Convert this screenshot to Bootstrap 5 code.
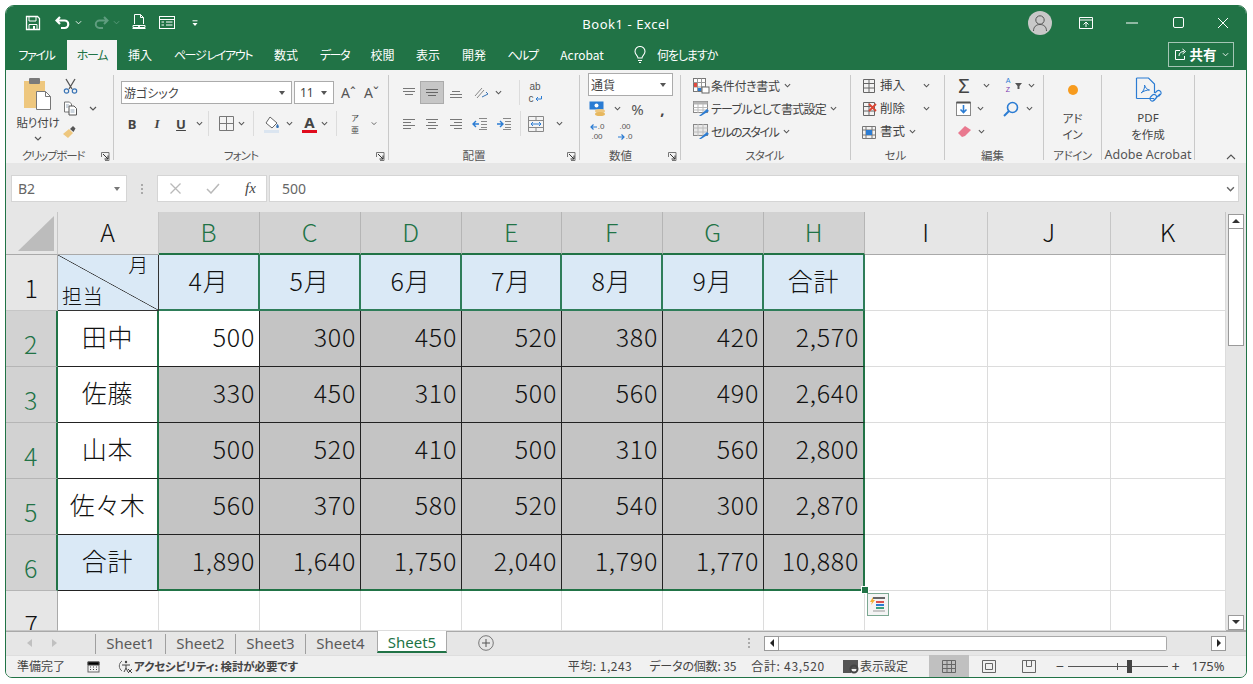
<!DOCTYPE html>
<html lang="ja">
<head>
<meta charset="utf-8">
<title>Book1 - Excel</title>
<link href="https://cdn.jsdelivr.net/npm/bootstrap@5.3.0/dist/css/bootstrap.min.css" rel="stylesheet">
<style>
html,body{height:100%;background:#fff;overflow:hidden}
body{font-family:"Noto Sans CJK JP","Noto Sans",sans-serif;font-feature-settings:"palt";font-size:12px;color:#444;padding:5px 6px 6px 5px}
.xl-win{width:1242px;height:673px;border:1px solid #217346;border-radius:9px 9px 7px 7px;overflow:hidden;display:flex;flex-direction:column;background:#f3f3f3}
.xl-title{height:34px;background:#217346;color:#fff;position:relative}
.xl-title svg{flex:none}
.qa{padding-left:19px}
.book{position:absolute;left:0;right:0;text-align:center;font:13px "Noto Sans",sans-serif;letter-spacing:.55px;top:9px;pointer-events:none}
.avatar{width:24px;height:24px;border-radius:50%;background:#c8c8c8;margin-right:11px}
.winbtns{width:46px;display:flex;justify-content:center}
.xl-tabs{height:31px;background:#217346;color:#fff;align-items:stretch}
.xl-tabs .nav-link{color:#fff;padding:0;height:30px;line-height:30px;font-size:12px;text-align:center;white-space:nowrap}
.xl-tabs .nav-link.active{background:#f3f3f3;color:#217346}
.xl-tabs .nav-link.kn{letter-spacing:-1.35px}
.t61{width:61px}.t50{width:50px}.t46{width:46px}.t100{width:100px}.t51{width:51px}.t45{width:45px}.t68{width:68px}
.tell{margin-left:18px;gap:11px;display:flex;align-items:center;letter-spacing:-1.1px}
.share{margin:2px 12px 0 auto;width:66px;height:25px;border:1px solid #a5c5b5;display:flex;align-items:center;justify-content:center;gap:3px;font-size:13.5px;font-weight:700;color:#fff}
.xl-ribbon{height:93px;padding:5px 0 3px;background:#f3f3f3;align-items:stretch}
.rg{border-right:1px solid #c9c9c9;flex:none;display:flex;flex-direction:column}
.w108{width:108px}.w275{width:275px}.w191{width:191px}.w101{width:101px}.w170{width:170px}.w94{width:94px}.w99{width:99px}.w58{width:58px}.w93{width:93px}
.rb{height:72px;flex:none}
.rl{height:13px;line-height:16px;display:grid;grid-template-columns:1fr auto 1fr;font-size:11.5px;white-space:nowrap;color:#555}
.rl>span{grid-column:2}
.rl>svg{grid-column:3;justify-self:end;margin:5px 3px 0 0}
.rr{height:23px;display:flex;align-items:center;white-space:nowrap}
.stk{margin-top:-1px}
.ic{display:flex;align-items:center;justify-content:center;flex:none}
.sl{background:#fff;border:1px solid #ababab;height:23px;display:flex;align-items:center;padding:0 6px 0 2px;justify-content:space-between}
.fnt{width:171px;margin-left:7px}.fsz{width:40px;margin-left:2px;padding-left:5px;font-family:"Noto Sans"}
.seln{width:85px;margin:-2px 0 1px 8px}
.vsep{width:1px;height:25px;background:#dcdcdc;flex:none}
.bold{font:700 13px "Noto Sans",sans-serif;color:#444}
.grow{font:14px "Noto Sans",sans-serif;color:#555}
.ib{font:italic 700 13px "Liberation Serif",serif}
.alsel{background:#c6c6c6;border:1px solid #ababab}
.pct{font:15px "Noto Sans",sans-serif;color:#555}
.big{font-size:11.5px;line-height:16px;text-align:center}
.stxt{font-size:12px;letter-spacing:-.3px;margin-left:1px}
.ctxt{font-size:12.5px}
.tiny{font:8px/9.5px "Liberation Sans",sans-serif;color:#555;flex-direction:column}
.tiny span{display:flex;align-items:center;gap:1px}
.wrapt{font:10px/11.5px "Liberation Sans",sans-serif;color:#555;flex-direction:column}
.wrapt span{display:flex;align-items:center;gap:1px}
.furi{font-size:8px;line-height:11.6px;flex-direction:column}
.xl-fx{height:49px;background:#e6e6e6;padding:12px 7px 10px 5px;gap:0;align-items:stretch}
.nbx{width:116px;background:#fff;border:1px solid #d5d5d5;font:14px "Noto Sans",sans-serif;color:#666;padding:0 6px;display:flex;align-items:center;justify-content:space-between}
.fxb{width:110px;background:#fff;border:1px solid #d5d5d5;display:flex;align-items:center;padding-left:12px;gap:25px}
.fxi{flex:1;background:#fff;border:1px solid #d5d5d5;margin-left:2px;font:14px "Noto Sans",sans-serif;color:#666;padding:0 3px 0 12px;display:flex;align-items:center;justify-content:space-between}
.dots{width:30px;display:flex;align-items:center;justify-content:center}
.xl-mid{height:419px;flex:none;background:#fff}
.sheet{position:relative;flex:none;display:grid;width:1220px;height:419px;overflow:hidden;grid-template-columns:52px 101px 101px 101px 101px 100px 101px 101px 101px 123px 123px 115px;grid-template-rows:43px repeat(6,56px) 40px;font-size:25px;color:#111;font-weight:300;letter-spacing:.7px}
.sheet>div{border-right:1px solid #dcdcdc;border-bottom:1px solid #dcdcdc;background:#fff;display:flex;align-items:center;justify-content:center;overflow:hidden;line-height:36px}
.sheet>div.hc{background:#e6e6e6;border-right-color:#c6c6c6;border-bottom-color:#a9a9a9;padding-bottom:3px}
.sheet>div.hr{background:#e6e6e6;border-right-color:#a9a9a9;border-bottom-color:#c6c6c6;align-items:flex-start;padding-top:14px}
.sheet>div.on{background:#d2d2d2;color:#217346;border-right-color:#b5b5b5;border-bottom-color:#b5b5b5}
.sheet>div.hc.on{border-bottom:2px solid #217346}
.sheet>div.hr.on{border-right:2px solid #217346}
.sheet>div.tb{background:#dae9f6;border:0 solid #2e7d59;border-right-width:2px;border-bottom-width:2px;padding-bottom:4px}
.sheet>div.ta{border-right:2px solid #217346;border-bottom:1px solid #222;padding-bottom:4px}
.sheet>div.ta.bl{background:#dae9f6;border-bottom-color:#222}
.sheet>div.nm{justify-content:flex-end;padding:0 4px 4px 0;background:#c4c4c4;border-right:1px solid #222;border-bottom:1px solid #222}
.sheet>div.nm.wt{background:#fff}
.sheet>div.nm.lr{border-right:2px solid #217346}
.sheet>div.nm.lb{border-bottom:2px solid #217346}
.sheet>div.corner{align-items:flex-end;justify-content:flex-end;padding:0 3px 3px 0;border-right-color:#c6c6c6;border-bottom-color:#a9a9a9;background:#e6e6e6}
.sheet>div.diag{background:linear-gradient(to top right,#dae9f6 calc(50% - .7px),#333 50%,#dae9f6 calc(50% + .7px));border-right:1px solid #333;border-bottom:1px solid #333;flex-direction:column;align-items:stretch;justify-content:space-between;font-size:20px;line-height:24px;padding:0 9px 2px 4px;overflow:visible}
.diag span:first-child{text-align:right;margin-top:-2px}
.sheet>div.handle{position:absolute;left:856px;top:375px;width:6px;height:6px;padding:0;border:0;background:#217346;outline:1px solid #fff}
.sheet>div.tag{position:absolute;left:861px;top:381px;width:22px;height:23px;border:1px solid #7ba892;background:#f4f4f4;display:flex;align-items:center;justify-content:center}
.vs{flex:1;background:#e6e6e6;padding:2px 2px 0;display:flex;flex-direction:column;border-bottom:1px solid #a9a9a9}
.sb{background:#fff;border:1px solid #9a9a9a;display:flex;align-items:center;justify-content:center;flex:none}
.vup{height:15px}.vth{height:117px;background:#fff;border:1px solid #9a9a9a;border-top:0}
.vdn{height:15px;margin-top:auto}
.xl-sh{height:24px;background:#e6e6e6;border-top:1px solid #a9a9a9;flex:none;align-items:stretch;font-size:15px;font-family:"Noto Sans","Noto Sans CJK JP",sans-serif;color:#5a5a5a}
.shn{width:89px;display:flex;align-items:center;padding-left:21px;gap:20px}
.stab{width:70px;height:20px;margin-top:2px;line-height:19px;text-align:center;border-left:1px solid #9f9f9f}
.stab.act{height:22px;margin-top:-1px;padding-top:3px;border:1px solid #a9a9a9;border-top:0;border-bottom:2px solid #217346;background:#fff;color:#217346;margin-left:2px;width:70px;line-height:16px}
.addt{margin-left:31px;display:flex;align-items:center}
.hsg{margin-left:auto;width:30px;display:flex;align-items:center;justify-content:center}
.hs{display:flex;width:462px;align-items:center;margin-right:20px}
.hb{width:15px;height:15px}.htr{width:388px;height:15px;background:#fff;border:1px solid #a9a9a9;border-left:0;border-radius:0 2px 2px 0}
.hsp{flex:1}
.xl-st{height:22px;background:#f1f1f1;border-top:1px solid #dedede;flex:none;align-items:center;font-size:12px;color:#444;white-space:nowrap}
.st1{width:87px;padding-left:11px;margin-right:-6px}
.acc{font-weight:700;font-size:11.5px;margin-left:1px;letter-spacing:-.15px}
.sum{letter-spacing:.5px}
.sum2{letter-spacing:.7px}
.cnt{letter-spacing:-.15px}
.vw{height:22px;display:flex;align-items:center;justify-content:center;width:40px}
.vw.cur{background:#c0c0c0}
.zoomline{width:100px;height:1px;background:#555;position:relative;margin:0 4px}
.thumb{position:absolute;left:59px;top:-6px;width:5px;height:13px;background:#444}
.tick{position:absolute;left:49px;top:-3px;width:1px;height:7px;background:#555}
</style>
</head>
<body>
<svg class="d-none">
<symbol id="chev" viewBox="0 0 8 5"><path d="M1 1l3 3 3-3" fill="none" stroke="#555" stroke-width="1.2"/></symbol>
<symbol id="lnc" viewBox="0 0 9 9"><path d="M.5 5V.5H8M8 .5V8.5H4" fill="none" stroke="#777"/><path d="M2 2l5 5M7 3.5V7H3.5" fill="none" stroke="#333"/></symbol>
<symbol id="lnt" viewBox="0 0 16 14"><path d="M2 2.5h12M2 5.5h12M4 8.500h8" stroke="#777" fill="none"/></symbol>
<symbol id="lnm" viewBox="0 0 16 14"><path d="M2 3.500h12M2 6.500h12M4 9.500h8" stroke="#666" fill="none"/></symbol>
<symbol id="lnb" viewBox="0 0 16 14"><path d="M4 5.500h8M2 8.500h12M2 11.500h12" stroke="#777" fill="none"/></symbol>
<symbol id="all" viewBox="0 0 16 14"><path d="M2 2.500h12M2 5.500h8M2 8.500h12M2 11.500h8" stroke="#777" fill="none"/></symbol>
<symbol id="alc" viewBox="0 0 16 14"><path d="M2 2.500h12M4 5.500h8M2 8.500h12M4 11.500h8" stroke="#777" fill="none"/></symbol>
<symbol id="alr" viewBox="0 0 16 14"><path d="M2 2.500h12M6 5.500h8M2 8.500h12M6 11.500h8" stroke="#777" fill="none"/></symbol>
<symbol id="grd" viewBox="0 0 16 16"><path d="M2.500 1.500h11v13h-11zM2.500 5.500h11M2.500 10h11M8 1.500v13" fill="none" stroke="#666"/></symbol>
<symbol id="arl" viewBox="0 0 7 6"><path d="M7 3H1M3.500.5L1 3l2.500 2.500" fill="none" stroke="#2b7cd3" stroke-width="1.200"/></symbol>
<symbol id="arr" viewBox="0 0 7 6"><path d="M0 3h6M3.500.5L6 3 3.500 5.500" fill="none" stroke="#2b7cd3" stroke-width="1.200"/></symbol>
</svg>
<div class="xl-win">
  <div class="xl-title d-flex align-items-center flex-none">
    <div class="qa d-flex align-items-center">
      <svg width="16" height="16" viewBox="0 0 16 16"><path d="M1.500 1.500h11l2 2v11h-13z" fill="none" stroke="#fff" stroke-width="1.300"/><path d="M4 2v4h7V2M4 14.500V9.500h8v5" fill="none" stroke="#fff"/><rect x="8" y="11" width="2" height="3" fill="#fff"/></svg>
      <svg width="16" height="14" viewBox="0 0 16 14" style="margin-left:14px"><path d="M5 1L1.500 4.500 5 8M2 4.500h7.500a3.700 3.700 0 0 1 0 7.500H6" fill="none" stroke="#fff" stroke-width="2.200"/></svg>
      <svg class="ms-1" width="7" height="5" viewBox="0 0 8 5"><path d="M1 1l3 3 3-3" fill="none" stroke="#fff"/></svg>
      <svg width="16" height="14" viewBox="0 0 16 14" style="margin-left:11px"><path d="M11 1l3.500 3.500L11 8M14 4.500H6.500a3.700 3.700 0 0 0 0 7.500H10" fill="none" stroke="#5f9d7f" stroke-width="2"/></svg>
      <svg class="ms-1" width="7" height="5" viewBox="0 0 8 5"><path d="M1 1l3 3 3-3" fill="none" stroke="#5f9d7f"/></svg>
      <svg width="14" height="17" viewBox="0 0 14 17" style="margin-left:12px"><path d="M2.500 10V.500h6l3 3V10M8.500.500v3h3" fill="none" stroke="#fff"/><path d="M.5 14.500h13M1 11.500h12v2H1z" fill="none" stroke="#fff"/><circle cx="7" cy="12.500" r="1" fill="#fff"/></svg>
      <svg width="16" height="13" viewBox="0 0 16 13" style="margin-left:13px"><rect x=".5" y=".5" width="15" height="12" fill="none" stroke="#fff"/><path d="M.5 3.500h15M7 6h6.500M7 9h6.500v0M2.500 6H5M2.500 9H5" stroke="#fff" fill="none"/></svg>
      <svg width="6" height="6" viewBox="0 0 6 6" style="margin-left:17px"><path d="M0.500 3h5l-2.500 3z" fill="#fff"/><path d="M.5 .8h5" stroke="#fff"/></svg>
    </div>
    <div class="book">Book1 - Excel</div>
    <div class="ms-auto d-flex align-items-center">
      <div class="avatar ic"><svg width="16" height="18" viewBox="0 0 16 18"><circle cx="8" cy="6" r="4.200" fill="none" stroke="#555"/><path d="M1.500 17c0-4 2.500-6.500 6.500-6.500s6.500 2.500 6.500 6.500" fill="none" stroke="#555"/></svg></div>
      <div class="winbtns"><svg width="14" height="12" viewBox="0 0 14 12"><path d="M.5.500h13v11H.5zM.5 3h13M7 10V5M4.500 7.500L7 5l2.500 2.500" fill="none" stroke="#fff"/></svg></div>
      <div class="winbtns"><svg width="12" height="2"><path d="M0 1h12" stroke="#fff"/></svg></div>
      <div class="winbtns" style="margin-right:-1px"><svg width="11" height="11"><rect x=".5" y=".5" width="10" height="10" rx="1.500" fill="none" stroke="#fff"/></svg></div>
      <div class="winbtns"><svg width="12" height="12"><path d="M1 1l10 10M11 1L1 11" stroke="#fff"/></svg></div>
    </div>
  </div>

  <ul class="nav xl-tabs flex-none flex-nowrap">
    <li class="nav-item t61"><a class="nav-link kn" href="#">ファイル</a></li>
    <li class="nav-item t50"><a class="nav-link active kn" href="#">ホーム</a></li>
    <li class="nav-item t46"><a class="nav-link" href="#">挿入</a></li>
    <li class="nav-item t100"><a class="nav-link kn" href="#">ページ レイアウト</a></li>
    <li class="nav-item t46"><a class="nav-link" href="#">数式</a></li>
    <li class="nav-item t51"><a class="nav-link kn" href="#">データ</a></li>
    <li class="nav-item t45"><a class="nav-link" href="#">校閲</a></li>
    <li class="nav-item t46"><a class="nav-link" href="#">表示</a></li>
    <li class="nav-item t46"><a class="nav-link" href="#">開発</a></li>
    <li class="nav-item t51"><a class="nav-link kn" href="#">ヘルプ</a></li>
    <li class="nav-item t68"><a class="nav-link" href="#">Acrobat</a></li>
    <li class="nav-item tell"><svg width="12" height="17" viewBox="0 0 12 17"><path d="M4 12c0-2-3-3.500-3-6.500a5 5 0 0 1 10 0C11 8.500 8 10 8 12zM4 14.500h4M5 16.500h2" fill="none" stroke="#fff" stroke-width="1.100"/></svg><span style="color:#fff">何をしますか</span></li>
    <li class="share"><svg width="13" height="13" viewBox="0 0 13 13"><path d="M6 2.500H1.500v9h9V8M5 8c0-3 2-4.500 5-4.500M8.500 1l3 2.500-3 2.500" fill="none" stroke="#fff"/></svg>共有<svg width="7" height="5" viewBox="0 0 8 5" style="margin-left:2px"><path d="M1 1l3 3 3-3" fill="none" stroke="#fff"/></svg></li>
  </ul>

  <div class="xl-ribbon d-flex flex-none">
    <div class="rg w108">
      <div class="rb d-flex">
        <div style="width:46px;margin-left:8px">
          <svg width="30" height="34" viewBox="0 0 30 34" style="margin:2px 0 0 9px;display:block"><rect x="1" y="4" width="21" height="27" fill="#eec77e"/><rect x="6" y="1" width="11" height="6" rx="1" fill="#7a7a7a"/><path d="M13.500 14.500h9l5 5v13h-14z" fill="#fff" stroke="#777"/><path d="M22.500 14.500v5h5" fill="none" stroke="#777"/></svg>
          <div class="big" style="margin:3px 0 0 2px;width:44px;letter-spacing:-.2px">貼り付け</div>
          <svg width="8" height="5" style="display:block;margin:6px 0 0 20px"><use href="#chev"/></svg>
        </div>
        <div style="width:20px;margin-top:-1px">
          <div class="rr ic"><svg width="15" height="16" viewBox="0 0 15 16"><circle cx="3.500" cy="13" r="2.200" fill="none" stroke="#3a74b5" stroke-width="1.200"/><circle cx="11.500" cy="13" r="2.200" fill="none" stroke="#3a74b5" stroke-width="1.200"/><path d="M3 1l6 10M12 1L6 11" stroke="#555" stroke-width="1.300"/></svg></div>
          <div class="rr ic"><svg width="15" height="15" viewBox="0 0 15 15"><path d="M1.500 1h5l2 2v8h-7z" fill="#fff" stroke="#777"/><path d="M6 5h5l2.500 2.500V14H6z" fill="#fff" stroke="#555"/><path d="M3 4h3M3 6h2M7.500 9h4M7.500 11h4" stroke="#9ab"/></svg></div>
          <div class="rr ic"><svg width="16" height="15" viewBox="0 0 16 15"><path d="M1 10l6-5 4 4-5 5z" fill="#eec77e"/><path d="M8 5l3-3 2.500 2.500-2 3.500z" fill="#555"/></svg></div>
        </div>
        <div style="margin:31px 0 0 9px"><svg width="8" height="5" style="display:block"><use href="#chev"/></svg></div>
      </div>
      <div class="rl"><span style="margin-left:-13px;letter-spacing:-1.2px">クリップボード</span><svg width="9" height="9"><use href="#lnc"/></svg></div>
    </div>

    <div class="rg w275">
      <div class="rb">
        <div class="rr" style="margin-top:6px">
          <div class="sl fnt"><span>游ゴシック</span><svg width="6" height="4"><path d="M0 0h6L3 4z" fill="#555"/></svg></div>
          <div class="sl fsz"><span>11</span><svg width="6" height="4"><path d="M0 0h6L3 4z" fill="#555"/></svg></div>
          <div class="ic grow" style="width:23px;margin-left:3px">Aˆ</div>
          <div class="ic grow" style="width:23px">Aˇ</div>
        </div>
        <div class="rr" style="margin-top:8px;padding-left:8px">
          <div class="ic bold" style="width:20px">B</div>
          <div class="ic ib" style="width:30px">I</div>
          <div class="ic bold" style="width:18px;text-decoration:underline">U</div>
          <div class="ic" style="width:18px"><svg width="7" height="5"><use href="#chev"/></svg></div>
          <div class="vsep"></div>
          <div class="ic" style="width:28px;margin-left:3px"><svg width="15" height="15"><path d="M.5.500h14v14H.5zM7.500.500v14M.5 7.500h14" fill="none" stroke="#777"/></svg></div>
          <div class="ic" style="width:8px;margin-left:-3px"><svg width="7" height="5"><use href="#chev"/></svg></div>
          <div class="vsep" style="margin-left:8px"></div>
          <div class="ic" style="width:28px;margin-left:4px"><svg width="17" height="18" viewBox="0 0 17 18"><path d="M6 2l7 6-5 5-6-5z" fill="#fff" stroke="#666"/><path d="M13.500 9c1.500 1.500 2 4 0 4s-1.500-2.500 0-4" fill="#3a74b5"/><rect y="15" width="15" height="3" fill="#dbe5f0"/></svg></div>
          <div class="ic" style="width:8px;margin-left:-1px"><svg width="7" height="5"><use href="#chev"/></svg></div>
          <div class="ic" style="width:21px;margin-left:6px;flex-direction:column;font:700 15px/14px 'Noto Sans';color:#444">A<span style="width:15px;height:3px;background:#e00b1c;display:block;margin-top:1px"></span></div>
          <div class="ic" style="width:8px"><svg width="7" height="5"><use href="#chev"/></svg></div>
          <div class="vsep" style="margin-left:8px"></div>
          <div class="ic furi" style="width:36px">ア<span>亜</span></div>
          <div class="ic" style="width:6px;margin-left:-2px"><svg width="7" height="5"><use href="#chev"/></svg></div>
        </div>
      </div>
      <div class="rl"><span style="margin-left:-20px;letter-spacing:-.8px">フォント</span><svg width="9" height="9"><use href="#lnc"/></svg></div>
    </div>

    <div class="rg w191">
      <div class="rb">
        <div class="rr" style="margin-top:6px;padding-left:9px">
          <div class="ic" style="width:22px"><svg width="16" height="14"><use href="#lnt"/></svg></div>
          <div class="ic alsel" style="width:24px;height:23px"><svg width="16" height="14"><use href="#lnm"/></svg></div>
          <div class="ic" style="width:24px"><svg width="16" height="14"><use href="#lnb"/></svg></div>
          <div class="ic" style="width:26px"><svg width="17" height="15" viewBox="0 0 17 15"><path d="M2 11L9 3M4 13l7-8" stroke="#888" fill="none"/><path d="M9 12l6-3-2-2" stroke="#3a74b5" fill="none"/></svg></div>
          <div class="ic" style="width:8px"><svg width="7" height="5"><use href="#chev"/></svg></div>
          <div class="vsep" style="margin-left:17px"></div>
          <div class="ic wrapt" style="width:28px;margin-left:1px">ab<span>c<svg width="7" height="6" viewBox="0 0 7 6"><path d="M6.500 0v3H1M3 1L1 3l2 2" fill="none" stroke="#2b7cd3"/></svg></span></div>
        </div>
        <div class="rr" style="margin-top:8px;padding-left:8px">
          <div class="ic" style="width:23px"><svg width="16" height="14"><use href="#all"/></svg></div>
          <div class="ic" style="width:24px"><svg width="16" height="14"><use href="#alc"/></svg></div>
          <div class="ic" style="width:24px"><svg width="16" height="14"><use href="#alr"/></svg></div>
          <div class="ic" style="width:24px"><svg width="16" height="14" viewBox="0 0 16 14"><path d="M7 1.500h8M9 4.500h6M9 7.500h6M9 10.500h6M7 12.500h8" stroke="#888"/><path d="M7 7H1M4 4L1 7l3 3" fill="none" stroke="#2b7cd3" stroke-width="1.400"/></svg></div>
          <div class="ic" style="width:24px"><svg width="16" height="14" viewBox="0 0 16 14"><path d="M7 1.500h8M9 4.500h6M9 7.500h6M9 10.500h6M7 12.500h8" stroke="#888"/><path d="M1 7h6M4 4l3 3-3 3" fill="none" stroke="#2b7cd3" stroke-width="1.400"/></svg></div>
          <div class="vsep" style="margin-left:4px"></div>
          <div class="ic" style="width:28px;margin-left:1px"><svg width="16" height="16" viewBox="0 0 16 16"><path d="M.5.500h15v15H.5zM.5 4.500h15M.5 11.500h15M8 .500v4M8 11.500v4" fill="none" stroke="#888"/><path d="M3 8h10M5 6L3 8l2 2M11 6l2 2-2 2" fill="none" stroke="#2b7cd3"/></svg></div>
          <div class="ic" style="width:18px"><svg width="7" height="5"><use href="#chev"/></svg></div>
        </div>
      </div>
      <div class="rl"><span style="margin-left:-20px">配置</span><svg width="9" height="9"><use href="#lnc"/></svg></div>
    </div>

    <div class="rg w101">
      <div class="rb">
        <div class="sl seln"><span>通貨</span><svg width="6" height="4"><path d="M0 0h6L3 4z" fill="#555"/></svg></div>
        <div class="rr" style="padding-left:8px">
          <div class="ic" style="width:20px"><svg width="18" height="16" viewBox="0 0 18 16"><rect x=".5" y=".5" width="14" height="8" fill="#2b7cd3"/><circle cx="7.500" cy="4.500" r="2" fill="#fff"/><ellipse cx="11" cy="10" rx="5" ry="2" fill="#eec77e"/><ellipse cx="11" cy="13" rx="5" ry="2" fill="#e7b85f"/></svg></div>
          <div class="ic" style="width:19px"><svg width="7" height="5"><use href="#chev"/></svg></div>
          <div class="ic pct" style="width:21px">%</div>
          <div class="ic bold" style="width:29px;font-size:15px">,</div>
        </div>
        <div class="rr" style="padding-left:6px">
          <div class="ic tiny" style="width:22px"><span><svg width="7" height="6"><use href="#arl"/></svg>.0</span>.00</div>
          <div class="ic tiny" style="width:26px;margin-left:4px">.00<span><svg width="7" height="6"><use href="#arr"/></svg>.0</span></div>
        </div>
      </div>
      <div class="rl"><span style="margin-left:-19px">数値</span><svg width="9" height="9"><use href="#lnc"/></svg></div>
    </div>

    <div class="rg w170">
      <div class="rb stk" style="padding-left:11px">
        <div class="rr"><div class="ic" style="width:18px"><svg width="17" height="16" viewBox="0 0 17 16"><rect x=".5" y=".5" width="12" height="13" fill="#fff" stroke="#777"/><path d="M.5 4.500h12M.5 9h12M4.500.5v13M8.500.5v13" stroke="#999"/><rect x="1" y="5" width="3" height="4" fill="#e14b3f"/><rect x="5" y="10" width="3" height="3" fill="#2b7cd3"/><rect x="9" y="9" width="7" height="6" fill="#fff" stroke="#666"/></svg></div><span class="stxt">条件付き書式</span><svg class="ms-1" width="7" height="5"><use href="#chev"/></svg></div>
        <div class="rr"><div class="ic" style="width:18px"><svg width="17" height="16" viewBox="0 0 17 16"><rect x=".5" y=".5" width="14" height="11" fill="#fff" stroke="#888"/><rect x=".5" y=".5" width="14" height="3" fill="#b4b4b4"/><path d="M.5 6.500h14M.5 9h14M5 3v9M10 3v9" stroke="#bbb"/><path d="M6 15l8-7 2 2-8 5z" fill="#2b7cd3"/></svg></div><span class="stxt" style="letter-spacing:-.75px">テーブルとして書式設定</span><svg class="ms-1" width="7" height="5"><use href="#chev"/></svg></div>
        <div class="rr"><div class="ic" style="width:18px"><svg width="17" height="16" viewBox="0 0 17 16"><rect x=".5" y=".5" width="14" height="11" fill="#e9e9e9" stroke="#888"/><path d="M.5 4h14M.5 8h14M5 0v12M10 0v12" stroke="#bbb"/><path d="M6 15l8-7 2 2-8 5z" fill="#2b7cd3"/></svg></div><span class="stxt" style="letter-spacing:-1.4px">セルのスタイル</span><svg class="ms-1" width="7" height="5"><use href="#chev"/></svg></div>
      </div>
      <div class="rl" style="margin-top:1px"><span style="margin-left:-2px;letter-spacing:-.7px">スタイル</span></div>
    </div>

    <div class="rg w94">
      <div class="rb stk" style="padding-left:9px">
        <div class="rr"><div class="ic" style="width:18px"><svg width="16" height="16"><use href="#grd"/></svg></div><span class="ctxt" style="margin-left:2px;width:43px">挿入</span><svg width="7" height="5"><use href="#chev"/></svg></div>
        <div class="rr"><div class="ic" style="width:18px"><svg width="16" height="16" viewBox="0 0 16 16"><use href="#grd"/><path d="M8 3l7 7M15 3L8 10" stroke="#dc4634" stroke-width="1.800"/></svg></div><span class="ctxt" style="margin-left:2px;width:43px">削除</span><svg width="7" height="5"><use href="#chev"/></svg></div>
        <div class="rr"><div class="ic" style="width:18px"><svg width="16" height="16" viewBox="0 0 16 16"><path d="M1.500 2.500h13v12h-13zM1.500 6h13M1.500 11h13M5 2.500v12M11 2.500v12" fill="none" stroke="#777"/><rect x="5" y="6" width="6" height="5" fill="#2b7cd3"/></svg></div><span class="ctxt" style="margin-left:2px">書式</span><svg class="ms-1" width="7" height="5"><use href="#chev"/></svg></div>
      </div>
      <div class="rl" style="margin-top:1px"><span style="margin-left:-4px">セル</span></div>
    </div>

    <div class="rg w99">
      <div class="rb stk" style="padding-left:11px">
        <div class="rr"><div class="ic" style="width:16px;font:20px/23px 'Noto Sans';color:#444">Σ</div><div class="ic" style="width:28px"><svg width="7" height="5"><use href="#chev"/></svg></div><div class="ic" style="width:16px;font:7px/8.500px 'Liberation Sans';color:#2b7cd3;flex-direction:column">A<span style="color:#7c3bb0">Z</span></div><div class="ic" style="width:8px;margin-left:-2px"><svg width="7" height="6"><path d="M0 0h7L4.500 3v3h-2V3z" fill="#555"/></svg></div><div class="ic" style="width:10px;margin-left:4px"><svg width="7" height="5"><use href="#chev"/></svg></div></div>
        <div class="rr"><div class="ic" style="width:15px"><svg width="15" height="15" viewBox="0 0 15 15"><rect x=".5" y="1.500" width="14" height="13" fill="#fff" stroke="#888"/><path d="M.5 1.500h14" stroke="#555" stroke-width="2"/><path d="M7.500 4v7M4.500 8.500l3 3 3-3" fill="none" stroke="#2b7cd3" stroke-width="1.600"/></svg></div><div class="ic" style="width:19px"><svg width="7" height="5"><use href="#chev"/></svg></div><div class="ic" style="width:20px;margin-left:11px"><svg width="16" height="16" viewBox="0 0 16 16"><circle cx="9.500" cy="6.500" r="5" fill="none" stroke="#2b7cd3" stroke-width="1.600"/><path d="M6 10l-5 5" stroke="#2b7cd3" stroke-width="2"/></svg></div><div class="ic" style="width:10px;margin-left:3px"><svg width="7" height="5"><use href="#chev"/></svg></div></div>
        <div class="rr"><div class="ic" style="width:16px"><svg width="15" height="13" viewBox="0 0 15 13"><path d="M5 12L1 8l7-7 6 4-6 6z" fill="#e9798f"/></svg></div><div class="ic" style="width:18px"><svg width="7" height="5"><use href="#chev"/></svg></div></div>
      </div>
      <div class="rl" style="margin-top:1px"><span style="margin-left:-3px">編集</span></div>
    </div>

    <div class="rg w58">
      <div class="rb text-center">
        <div class="ic" style="height:22px;margin-top:4px"><svg width="12" height="12"><circle cx="6" cy="6" r="5" fill="#f79b1e"/></svg></div>
        <div class="big" style="margin-top:9px">アド<br>イン</div>
      </div>
      <div class="rl"><span style="letter-spacing:-.4px">アドイン</span></div>
    </div>

    <div class="rg w93">
      <div class="rb text-center">
        <div class="ic" style="height:30px"><svg width="28" height="28" viewBox="0 0 28 28"><path d="M2.500 2h12l6 6v9M20 22.500H2.500z" fill="none" stroke="#2b7cd3" stroke-width="1.200"/><path d="M2.500 2v20.500" stroke="#2b7cd3" stroke-width="1.200"/><path d="M7 17c3-2 4-6 3.500-8 1 3 3 5 5 5-3 0-6 1-8.500 3z" fill="none" stroke="#2b7cd3"/><path d="M19 25l7-7M16.500 21l2-2a2.500 2.500 0 0 1 3.500 3.500l-2 2a2.500 2.500 0 0 1-3.500-3.500zM21 17l2-2a2.500 2.500 0 0 1 3.500 3.500l-2 2" fill="none" stroke="#2b7cd3" stroke-width="1.100"/></svg></div>
        <div class="big" style="margin-top:4px"><span style="font-family:'Noto Sans'">PDF</span><br>を作成</div>
      </div>
      <div class="rl" style="font-family:'Noto Sans';font-size:12.5px"><span>Adobe Acrobat</span></div>
    </div>
    <div class="ms-auto d-flex align-items-end" style="padding:0 10px 0 0"><svg width="10" height="6" viewBox="0 0 10 6"><path d="M1 5l4-4 4 4" fill="none" stroke="#555" stroke-width="1.100"/></svg></div>
  </div>

  <div class="xl-fx d-flex flex-none">
    <div class="nbx"><span>B2</span><svg width="6" height="4"><path d="M0 0h6L3 4z" fill="#777"/></svg></div>
    <div class="dots"><svg width="2" height="10"><path d="M0 0h2v2H0zM0 4h2v2H0zM0 8h2v2H0z" fill="#aaa"/></svg></div>
    <div class="fxb"><svg width="11" height="11"><path d="M.5.500l10 10M10.500.500l-10 10" stroke="#b9b9b9" stroke-width="1.300"/></svg><svg width="14" height="11"><path d="M1 6l4 4 8-9" fill="none" stroke="#b9b9b9" stroke-width="1.500"/></svg><span style="font:italic 400 15px 'Liberation Serif',serif;color:#444">fx</span></div>
    <div class="fxi"><span>500</span><svg width="9" height="6" viewBox="0 0 8 5"><path d="M1 1l3 3 3-3" fill="none" stroke="#666" stroke-width="1.300"/></svg></div>
  </div>

  <div class="xl-mid d-flex">
    <div class="sheet">
      <div class="corner"><svg width="36" height="35"><path d="M36 0v35H0z" fill="#bcbcbc"/></svg></div>
      <div class="hc">A</div><div class="hc on">B</div><div class="hc on">C</div><div class="hc on">D</div><div class="hc on">E</div><div class="hc on">F</div><div class="hc on">G</div><div class="hc on">H</div><div class="hc">I</div><div class="hc">J</div><div class="hc">K</div>

      <div class="hr">1</div>
      <div class="diag"><span>月</span><span>担当</span></div>
      <div class="tb">4月</div><div class="tb">5月</div><div class="tb">6月</div><div class="tb">7月</div><div class="tb">8月</div><div class="tb">9月</div><div class="tb">合計</div><div></div><div></div><div></div>

      <div class="hr on">2</div>
      <div class="ta">田中</div>
      <div class="nm wt">500</div><div class="nm">300</div><div class="nm">450</div><div class="nm">520</div><div class="nm">380</div><div class="nm">420</div><div class="nm lr">2,570</div><div></div><div></div><div></div>

      <div class="hr on">3</div>
      <div class="ta">佐藤</div>
      <div class="nm">330</div><div class="nm">450</div><div class="nm">310</div><div class="nm">500</div><div class="nm">560</div><div class="nm">490</div><div class="nm lr">2,640</div><div></div><div></div><div></div>

      <div class="hr on">4</div>
      <div class="ta">山本</div>
      <div class="nm">500</div><div class="nm">520</div><div class="nm">410</div><div class="nm">500</div><div class="nm">310</div><div class="nm">560</div><div class="nm lr">2,800</div><div></div><div></div><div></div>

      <div class="hr on">5</div>
      <div class="ta">佐々木</div>
      <div class="nm">560</div><div class="nm">370</div><div class="nm">580</div><div class="nm">520</div><div class="nm">540</div><div class="nm">300</div><div class="nm lr">2,870</div><div></div><div></div><div></div>

      <div class="hr on">6</div>
      <div class="ta bl">合計</div>
      <div class="nm lb">1,890</div><div class="nm lb">1,640</div><div class="nm lb">1,750</div><div class="nm lb">2,040</div><div class="nm lb">1,790</div><div class="nm lb">1,770</div><div class="nm lr lb">10,880</div><div></div><div></div><div></div>

      <div class="hr">7</div>
      <div></div><div></div><div></div><div></div><div></div><div></div><div></div><div></div><div></div><div></div><div></div>

      <div class="handle"></div>
      <div class="tag"><svg width="16" height="17" viewBox="0 0 16 17"><path d="M3 1L0 6h2L1 9l4-5H3l1-3z" fill="#f2b134"/><rect x="3" y="1" width="12" height="2" fill="#666"/><rect x="6" y="5" width="8" height="2" fill="#d9534f"/><rect x="6" y="8" width="8" height="2" fill="#2b7cd3"/><rect x="6" y="11" width="8" height="2" fill="#3aa17e"/><path d="M3 15h12" stroke="#999"/></svg></div>
    </div>
    <div class="vs">
      <div class="sb vup"><svg width="8" height="4"><path d="M0 4h8L4 0z" fill="#333"/></svg></div>
      <div class="vth"></div>
      <div class="sb vdn"><svg width="8" height="4"><path d="M0 0h8L4 4z" fill="#333"/></svg></div>
    </div>
  </div>

  <div class="xl-sh d-flex">
    <div class="shn"><svg width="5" height="8"><path d="M5 0v8L0 4z" fill="#c0c0c0"/></svg><svg width="5" height="8"><path d="M0 0v8l5-4z" fill="#c0c0c0"/></svg></div>
    <div class="stab">Sheet1</div><div class="stab">Sheet2</div><div class="stab">Sheet3</div><div class="stab">Sheet4</div>
    <div class="stab act">Sheet5</div>
    <div class="addt"><svg width="16" height="16" viewBox="0 0 16 16"><circle cx="8" cy="8" r="7.300" fill="none" stroke="#777"/><path d="M4 8h8M8 4v8" stroke="#555"/></svg></div>
    <div class="hsg"><svg width="2" height="10"><path d="M0 0h2v2H0zM0 4h2v2H0zM0 8h2v2H0z" fill="#aaa"/></svg></div>
    <div class="hs">
      <div class="sb hb"><svg width="4" height="8"><path d="M4 0v8L0 4z" fill="#222"/></svg></div>
      <div class="htr"></div>
      <div class="hsp"></div>
      <div class="sb hb"><svg width="4" height="8"><path d="M0 0v8l4-4z" fill="#222"/></svg></div>
    </div>
  </div>

  <div class="xl-st d-flex">
    <div class="st1">準備完了</div>
    <svg width="13" height="13" viewBox="0 0 13 13"><rect x="1" y="2" width="11" height="10" fill="none" stroke="#666"/><path d="M1 2h11v3H1zM3 7h1M6 7h1M9 7h1M3 9.500h1M6 9.500h1M9 9.500h1" stroke="#444"/></svg>
    <svg width="15" height="15" viewBox="0 0 15 15" style="margin-left:18px"><path d="M4 2a6 6 0 0 0 0 10" fill="none" stroke="#666"/><circle cx="8" cy="3" r="1.200" fill="#444"/><path d="M4 6h8M8 6v3l-2 4M8 9l2 4M10 10l4 4M14 10l-4 4" fill="none" stroke="#444"/></svg>
    <span class="acc">アクセシビリティ: 検討が必要です</span>
    <span class="sum" style="margin-left:270px">平均: 1,243</span>
    <span class="cnt" style="margin-left:17px">データの個数: 35</span>
    <span class="sum2" style="margin-left:15px">合計: 43,520</span>
    <svg width="17" height="15" viewBox="0 0 17 15" style="margin-left:18px"><path d="M0 1h15v9H8v4H0z" fill="#555"/><circle cx="11" cy="10" r="3.500" fill="none" stroke="#444" stroke-width="2"/></svg>
    <span>表示設定</span>
    <div class="vw cur" style="margin-left:21px"><svg width="14" height="13" viewBox="0 0 14 13"><path d="M.5.500h13v12H.5zM.5 4.500h13M.5 8.500h13M5 .500v12M9.500.500v12" fill="none" stroke="#666"/></svg></div>
    <div class="vw"><svg width="14" height="13" viewBox="0 0 14 13"><path d="M.5.500h13v12H.5zM3.500 3.500h7v6h-7z" fill="none" stroke="#666"/></svg></div>
    <div class="vw"><svg width="14" height="13" viewBox="0 0 14 13"><path d="M.5.500h13v12H.5zM4.500.500v6h5v-6" fill="none" stroke="#666"/></svg></div>
    <span style="margin-left:7px;font-size:14px;line-height:1">−</span>
    <div class="zoomline"><span class="tick"></span><span class="thumb"></span></div>
    <span style="font-size:14px;line-height:1">+</span>
    <span style="margin-left:12px;font-family:'Noto Sans';font-size:13px">175%</span>
  </div>
</div>
<script src="https://cdn.jsdelivr.net/npm/bootstrap@5.3.0/dist/js/bootstrap.bundle.min.js"></script>
</body>
</html>
